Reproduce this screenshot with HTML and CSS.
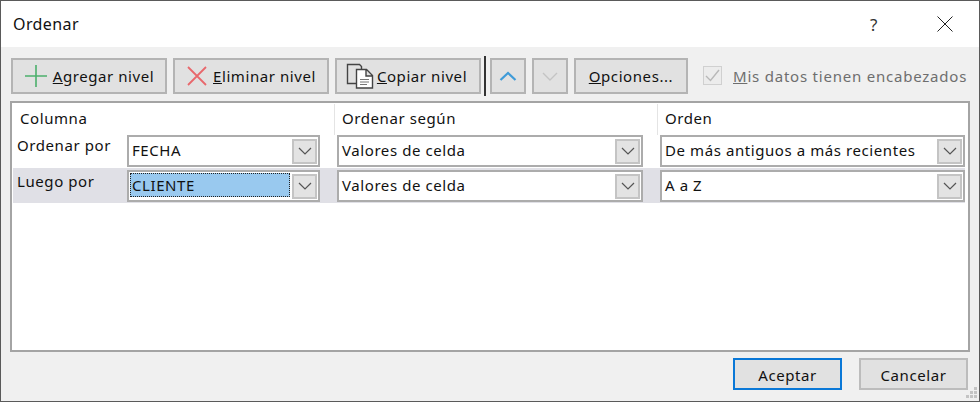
FILE: index.html
```html
<!DOCTYPE html>
<html lang="es">
  <head>
    <meta charset="UTF-8" />
    <title>Ordenar</title>
    <link rel="stylesheet" href="styles.css">
  </head>
  <body>
    <div class="dialog">
      <div class="titlebar">
        <span class="title">Ordenar</span>
        <span class="help">?</span>
        <svg class="close" width="16" height="16" viewBox="0 0 16 16"><path d="M0.5 0.5L15.5 15.5M15.5 0.5L0.5 15.5" stroke="#222" fill="none" /></svg>
      </div>

      <div class="toolbar">
        <button class="btn btn-add">
          <svg width="24" height="24" viewBox="0 0 24 24"><path d="M12 1V23M1 12H23" stroke="#4cb06c" stroke-width="1.6" fill="none" /></svg>
          <span><u>A</u>gregar nivel</span>
        </button>
        <button class="btn btn-del">
          <svg width="20" height="20" viewBox="0 0 20 20"><path d="M1 1L19 19M19 1L1 19" stroke="#e8686c" stroke-width="1.8" fill="none" /></svg>
          <span><u>E</u>liminar nivel</span>
        </button>
        <button class="btn btn-copy">
          <svg width="28" height="26" viewBox="0 0 28 26">
            <path d="M10 20.5H1.5V1.5H13.5L15.5 3.5V6" stroke="#444" stroke-width="1.4" fill="none" />
            <path d="M10.5 6.5H20.5L26.5 12.5V25H10.5Z M20 7V13H26.5" stroke="#444" stroke-width="1.4" fill="#fff" />
            <path d="M14 16.5H23M14 19H23M14 21.5H21" stroke="#777" fill="none" />
          </svg>
          <span><u>C</u>opiar nivel</span>
        </button>
        <div class="sep"></div>
        <button class="btn btn-arrow">
          <svg width="18" height="10" viewBox="0 0 18 10"><path d="M1.5 9L9 2L16.5 9" stroke="#3f9bd8" stroke-width="2.2" fill="none" /></svg>
        </button>
        <button class="btn btn-arrow">
          <svg width="16" height="9" viewBox="0 0 16 9"><path d="M1 1L8 8L15 1" stroke="#c4c4c4" stroke-width="1.4" fill="none" /></svg>
        </button>
        <button class="btn btn-options"><span><u>O</u>pciones...</span></button>
        <label class="headers">
          <span class="check">
            <svg width="15" height="13" viewBox="0 0 15 13"><path d="M1 7L5.5 11.5L14 1" stroke="#b8b8b8" stroke-width="1.4" fill="none" /></svg>
          </span>
          <span><u>M</u>is datos tienen encabezados</span>
        </label>
      </div>

      <div class="list">
        <div class="list-head">
          <div class="col col-1">Columna</div>
          <div class="col col-2">Ordenar según</div>
          <div class="col col-3">Orden</div>
        </div>
        <div class="row">
          <div class="row-label">Ordenar por</div>
          <div class="combo"><span class="combo-text">FECHA</span><span class="combo-btn"><svg width="14" height="8" viewBox="0 0 14 8"><path d="M1 1L7 7L13 1" stroke="#555" stroke-width="1.2" fill="none" /></svg></span></div>
          <div class="combo"><span class="combo-text">Valores de celda</span><span class="combo-btn"><svg width="14" height="8" viewBox="0 0 14 8"><path d="M1 1L7 7L13 1" stroke="#555" stroke-width="1.2" fill="none" /></svg></span></div>
          <div class="combo"><span class="combo-text">De más antiguos a más recientes</span><span class="combo-btn"><svg width="14" height="8" viewBox="0 0 14 8"><path d="M1 1L7 7L13 1" stroke="#555" stroke-width="1.2" fill="none" /></svg></span></div>
        </div>
        <div class="row row-active">
          <div class="row-label">Luego por</div>
          <div class="combo"><span class="combo-text combo-selected">CLIENTE</span><span class="combo-btn"><svg width="14" height="8" viewBox="0 0 14 8"><path d="M1 1L7 7L13 1" stroke="#555" stroke-width="1.2" fill="none" /></svg></span></div>
          <div class="combo"><span class="combo-text">Valores de celda</span><span class="combo-btn"><svg width="14" height="8" viewBox="0 0 14 8"><path d="M1 1L7 7L13 1" stroke="#555" stroke-width="1.2" fill="none" /></svg></span></div>
          <div class="combo"><span class="combo-text">A a Z</span><span class="combo-btn"><svg width="14" height="8" viewBox="0 0 14 8"><path d="M1 1L7 7L13 1" stroke="#555" stroke-width="1.2" fill="none" /></svg></span></div>
        </div>
      </div>

      <div class="footer">
        <button class="btn btn-foot btn-default">Aceptar</button>
        <button class="btn btn-foot">Cancelar</button>
      </div>
      <svg class="grip" width="13" height="13" viewBox="0 0 13 13" fill="#c4c4c4">
        <rect x="9" y="0" width="3" height="3" /><rect x="5" y="4" width="3" height="3" /><rect x="9" y="4" width="3" height="3" />
        <rect x="1" y="8" width="3" height="3" /><rect x="5" y="8" width="3" height="3" /><rect x="9" y="8" width="3" height="3" />
      </svg>
    </div>
  </body>
</html>
```

FILE: styles.css
```css
* {
  padding: 0;
  margin: 0;
  box-sizing: border-box;
}

body {
  width: 980px;
  height: 402px;
  overflow: hidden;
  background: #888;
  font-family: "Noto Sans", "Open Sans", sans-serif;
  font-size: 15px;
  letter-spacing: 0.58px;
  color: #111;
}

.dialog {
  position: relative;
  width: 980px;
  height: 402px;
  display: flex;
  flex-direction: column;
  background-color: #f0f0f0;
  border: 1px solid #5a5a5a;
}

.titlebar {
  height: 46px;
  flex: none;
  display: flex;
  align-items: center;
  padding-left: 12px;
  background-color: #fff;
}

.title {
  flex: 1;
  font-size: 16px;
  letter-spacing: 0.4px;
}

.help {
  width: 18px;
  margin-right: 54px;
  font-size: 17px;
  color: #333;
  text-align: center;
}

.close {
  margin-right: 26px;
}

.toolbar {
  display: flex;
  align-items: center;
  height: 54px;
  flex: none;
  padding: 3px 0 0 10px;
}

.btn {
  height: 36px;
  display: flex;
  align-items: center;
  justify-content: center;
  flex: none;
  padding-top: 1px;
  border: 2px solid #b4b4b4;
  background-color: #e1e1e1;
  font-family: inherit;
  font-size: 15px;
  letter-spacing: inherit;
  color: #111;
}

.btn-add {
  width: 156px;
  gap: 5px;
  margin-right: 6px;
}

.btn-del {
  width: 156px;
  gap: 6px;
  padding-left: 1px;
  margin-right: 6px;
}

.btn-copy {
  width: 146px;
  gap: 3px;
  padding-right: 3px;
}

.sep {
  width: 2px;
  height: 40px;
  margin: 0 4px 0 3px;
  background-color: #333;
}

.btn-arrow {
  width: 36px;
  margin-right: 6px;
}

.btn-options {
  width: 114px;
  margin-right: 15px;
}

.headers {
  display: flex;
  align-items: center;
  gap: 11px;
  letter-spacing: 0.78px;
  color: #6e6e6e;
}

.check {
  width: 19px;
  height: 19px;
  display: flex;
  align-items: center;
  justify-content: center;
  border: 1px solid #d0d0d0;
  background-color: #ececec;
}

.list {
  width: 960px;
  height: 251px;
  flex: none;
  margin-left: 9px;
  padding: 1px 3px 0 1px;
  border: 2px solid #a4a4a4;
  background-color: #fff;
}

.list-head {
  height: 31px;
  display: grid;
  grid-template-columns: 321px 323px 1fr;
}

.col {
  padding: 3px 0 0 7px;
  line-height: 22px;
}

.col-2,
.col-3 {
  border-left: 1px solid #e4e4e4;
}

.row {
  height: 33px;
  display: grid;
  grid-template-columns: 114px 193px 323px 322px;
}

.row-active {
  height: 35px;
  background-color: #e0e0e6;
}

.row-label {
  padding-left: 4px;
  line-height: 20px;
}

.row-active .row-label {
  padding-top: 3px;
}

.combo {
  display: flex;
  align-items: center;
  height: 32px;
  border: 2px solid #acacac;
  background-color: #fff;
  padding-right: 1px;
}

.row-active .combo {
  margin-top: 2px;
}

.combo:nth-child(3),
.combo:nth-child(4) {
  margin-left: 17px;
}

.combo-text {
  flex: 1;
  padding-left: 3px;
  margin: 0 2px 2px 0;
  line-height: 24px;
}

.combo-selected {
  margin-left: 1px;
  padding-left: 2px;
  background-color: #99c9ef;
  outline: 1px dotted #222;
  outline-offset: -1px;
}

.combo-btn {
  width: 25px;
  height: 25px;
  flex: none;
  display: flex;
  align-items: center;
  justify-content: center;
  border: 2px solid #c4c4c4;
  background-color: #e3e3e3;
}

.footer {
  flex: 1;
  display: flex;
  justify-content: flex-end;
  align-items: flex-start;
  gap: 17px;
  padding: 6px 11px 0 0;
}

.btn-foot {
  width: 109px;
  height: 32px;
  border-color: #bcbcbc;
}

.btn-default {
  border: 2px solid #0a78d7;
}

.grip {
  position: absolute;
  right: 1px;
  bottom: 1px;
}
```
